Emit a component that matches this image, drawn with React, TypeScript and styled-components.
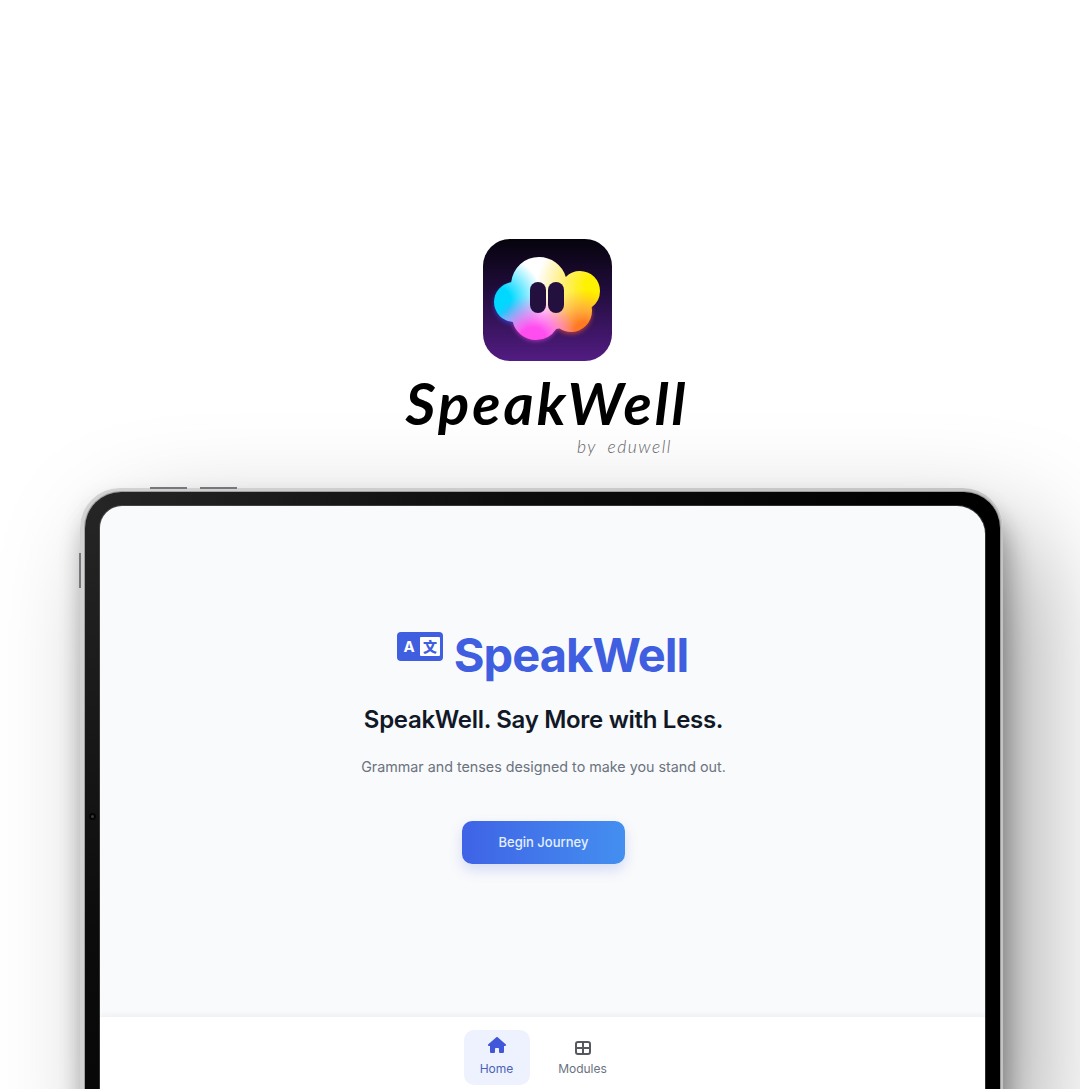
import React from 'react';
import styled, { createGlobalStyle } from 'styled-components';
import { FaHouse } from 'react-icons/fa6';

const GlobalStyle = createGlobalStyle`
  html, body {
    margin: 0;
    padding: 0;
    background: #ffffff;
  }
  body {
    font-family: Inter, "Liberation Sans", sans-serif;
  }
`;

const Page = styled.div`
  width: 1080px;
  height: 1089px;
  overflow: hidden;
  display: flex;
  flex-direction: column;
  padding-top: 239px;
  box-sizing: border-box;
`;

const Brand = styled.header`
  flex: none;
  display: flex;
  flex-direction: column;
  align-items: center;
  margin-left: 14px;
  height: 249px;
`;

const AppIcon = styled.svg`
  display: block;
  width: 129px;
  height: 122px;
`;

const Wordmark = styled.h1`
  margin: 12px 0 0;
  font-family: "Lato", sans-serif;
  font-style: italic;
  font-weight: 700;
  font-size: 58px;
  line-height: 60px;
  letter-spacing: 3px;
  color: #000000;
`;

const ByLine = styled.div`
  align-self: flex-end;
  margin: 3px 408px 0 0;
  font-family: "Lato", sans-serif;
  font-style: italic;
  font-weight: 300;
  font-size: 17.5px;
  line-height: 22px;
  letter-spacing: 1.5px;
  word-spacing: 5px;
  color: #67676b;
`;

const Tablet = styled.div`
  position: relative;
  flex: none;
  width: 923px;
  height: 640px;
  margin-left: 80px;
  box-sizing: border-box;
  padding: 4px 3px 0 5px;
  border-radius: 40px 40px 0 0;
  background: linear-gradient(90deg, #d2d2d2 0%, #c4c4c4 100%);
  box-shadow:
    6px 24px 26px rgba(0, 0, 0, 0.28),
    34px 46px 110px rgba(0, 0, 0, 0.34),
    -3px 6px 22px rgba(0, 0, 0, 0.07);
`;

const Bezel = styled.div`
  height: 100%;
  box-sizing: border-box;
  padding: 14px 15px 0;
  border-radius: 36px 36px 0 0;
  background: radial-gradient(circle at 0 0, #262626 0, #0c0c0c 440px, #000000 900px);
  box-shadow: 0 0 0 1px rgba(120, 120, 120, 0.55);
`;

const Screen = styled.main`
  height: 100%;
  display: flex;
  flex-direction: column;
  border-radius: 22px 28px 0 0;
  background: #f9fafb;
  overflow: hidden;
  box-shadow: 0 0 0 1px rgba(128, 128, 128, 0.35);
`;

const Hero = styled.section`
  flex: 0 0 511px;
  display: flex;
  flex-direction: column;
  align-items: center;
  padding: 117px 0 0 2px;
  box-sizing: border-box;
`;

const LogoRow = styled.div`
  display: flex;
  align-items: flex-start;
  gap: 11px;
  color: #3f5ee0;
  margin-left: -2px;
`;

const LogoGlyph = styled.svg`
  display: block;
  width: 46px;
  height: 29px;
  margin-top: 9px;
`;

const LogoText = styled.div`
  font-size: 47px;
  line-height: 64px;
  font-weight: 700;
  letter-spacing: -1px;
`;

const Title = styled.h2`
  margin: 17px 0 0;
  font-size: 24px;
  line-height: 32px;
  font-weight: 600;
  color: #111827;
  letter-spacing: -0.3px;
`;

const Subtitle = styled.p`
  margin: 19px 0 0;
  font-size: 14.3px;
  line-height: 24px;
  color: #6b7280;
`;

const CTA = styled.button`
  margin-top: 42px;
  width: 163px;
  height: 43px;
  padding: 0 0 2px;
  border: 0;
  border-radius: 10px;
  background: linear-gradient(90deg, #3f63e6 0%, #448ff0 100%);
  color: #e6effd;
  font-family: inherit;
  font-size: 13px;
  font-weight: 500;
  box-shadow: 0 6px 14px rgba(63, 99, 230, 0.2);
`;

const BottomNav = styled.nav`
  flex: 1;
  display: flex;
  justify-content: center;
  align-items: flex-start;
  gap: 20px;
  padding: 13px 6px 0 0;
  background: #ffffff;
  box-shadow: 0 -2px 6px rgba(0, 0, 0, 0.05);
`;

const NavItem = styled.div<{ $active?: boolean }>`
  width: 66px;
  height: 55px;
  box-sizing: border-box;
  padding-top: 6px;
  display: flex;
  flex-direction: column;
  align-items: center;
  border-radius: 10px;
  background: ${p => (p.$active ? '#eef2fe' : 'transparent')};
  color: ${p => (p.$active ? '#3f57d8' : '#55585f')};
`;

const NavIconBox = styled.div`
  height: 24px;
  display: flex;
  align-items: center;
  justify-content: center;
`;

const HomeGlyph = styled(FaHouse)`
  display: block;
  width: 18px;
  height: 16px;
  margin-bottom: 6px;
`;

const NavLabel = styled.span<{ $active?: boolean }>`
  font-size: 12px;
  line-height: 16px;
  margin-top: 1px;
  color: ${p => (p.$active ? '#4a62b8' : '#6b7280')};
`;

const VolumeKey = styled.span<{ $left: number }>`
  position: absolute;
  top: -1px;
  left: ${p => p.$left}px;
  width: 37px;
  height: 2px;
  background: #77777b;
`;

const PowerKey = styled.span`
  position: absolute;
  left: -1px;
  top: 65px;
  width: 2px;
  height: 35px;
  background: #77777b;
`;

const Camera = styled.span`
  position: absolute;
  left: 9px;
  top: 325px;
  width: 7px;
  height: 7px;
  border-radius: 50%;
  background: #3a3a3a;
  border: 2px solid #050505;
  box-sizing: border-box;
`;

const CloudLogo = () => (
  <AppIcon viewBox="0 0 129 122">
    <defs>
      <linearGradient id="tile" x1="0" y1="0" x2="0" y2="1">
        <stop offset="0" stopColor="#06030c" />
        <stop offset="0.4" stopColor="#1f0c3a" />
        <stop offset="1" stopColor="#521c82" />
      </linearGradient>
      <radialGradient id="cyan" gradientUnits="userSpaceOnUse" cx="14" cy="62" r="46">
        <stop offset="0.3" stopColor="#00d8ff" />
        <stop offset="1" stopColor="#00d8ff" stopOpacity="0" />
      </radialGradient>
      <radialGradient id="yellow" gradientUnits="userSpaceOnUse" cx="114" cy="48" r="60">
        <stop offset="0.2" stopColor="#fff200" />
        <stop offset="1" stopColor="#ffd400" stopOpacity="0" />
      </radialGradient>
      <radialGradient id="orange" gradientUnits="userSpaceOnUse" cx="100" cy="92" r="42">
        <stop offset="0.2" stopColor="#ff7a20" />
        <stop offset="1" stopColor="#ff9a2c" stopOpacity="0" />
      </radialGradient>
      <radialGradient id="pink" gradientUnits="userSpaceOnUse" cx="50" cy="102" r="46">
        <stop offset="0.3" stopColor="#ff4df0" />
        <stop offset="1" stopColor="#ff60e8" stopOpacity="0" />
      </radialGradient>
      <filter id="soft">
        <feGaussianBlur stdDeviation="0.5" />
      </filter>
      <filter id="glow" x="-20%" y="-20%" width="140%" height="140%">
        <feGaussianBlur stdDeviation="2" />
      </filter>
      <clipPath id="cloud">
        <circle cx="56" cy="46" r="28" />
        <circle cx="31" cy="63" r="20" />
        <circle cx="97" cy="52" r="20" />
        <circle cx="88" cy="72" r="21" />
        <circle cx="53" cy="77" r="24" />
        <circle cx="72" cy="66" r="24" />
        <rect x="30" y="45" width="66" height="35" />
      </clipPath>
    </defs>
    <rect width="129" height="122" rx="27" fill="url(#tile)" />
    <g filter="url(#glow)" opacity="0.55">
      <circle cx="53" cy="78" r="24" fill="#ff4df0" />
      <circle cx="88" cy="74" r="21" fill="#ff5a2c" />
      <circle cx="31" cy="65" r="20" fill="#2a5bff" />
    </g>
    <g clipPath="url(#cloud)" filter="url(#soft)">
      <rect width="129" height="122" fill="#ffffff" />
      <rect width="129" height="122" fill="url(#yellow)" />
      <rect width="129" height="122" fill="url(#cyan)" />
      <rect width="129" height="122" fill="url(#orange)" />
      <rect width="129" height="122" fill="url(#pink)" />
    </g>
    <rect x="47" y="43" width="16" height="31" rx="8" fill="#24103f" />
    <rect x="65" y="43" width="16" height="31" rx="8" fill="#24103f" />
  </AppIcon>
);

const TranslateGlyph = () => (
  <LogoGlyph viewBox="0 0 46 29">
    <rect width="46" height="29" rx="4" fill="currentColor" />
    <rect x="23" y="5" width="20" height="19" rx="1" fill="#ffffff" />
    <text x="12" y="20" textAnchor="middle" fontFamily="Inter, sans-serif" fontWeight="700" fontSize="15" fill="#ffffff">A</text>
    <text x="33" y="20" textAnchor="middle" fontFamily="'Noto Sans CJK SC', sans-serif" fontWeight="900" fontSize="14" fill="currentColor">文</text>
  </LogoGlyph>
);

const ModulesGlyph = () => (
  <svg width="16" height="14" viewBox="0 0 16 14" fill="none" stroke="currentColor" strokeWidth="2">
    <rect x="1" y="1" width="14" height="12" rx="2" />
    <path d="M8 1v12M1 7h14" />
  </svg>
);

const App = () => (
  <Page>
    <GlobalStyle />
    <Brand>
      <CloudLogo />
      <Wordmark>SpeakWell</Wordmark>
      <ByLine>by eduwell</ByLine>
    </Brand>
    <Tablet>
      <VolumeKey $left={70} />
      <VolumeKey $left={120} />
      <PowerKey />
      <Camera />
      <Bezel>
        <Screen>
          <Hero>
            <LogoRow>
              <TranslateGlyph />
              <LogoText>SpeakWell</LogoText>
            </LogoRow>
            <Title>SpeakWell. Say More with Less.</Title>
            <Subtitle>Grammar and tenses designed to make you stand out.</Subtitle>
            <CTA>Begin Journey</CTA>
          </Hero>
          <BottomNav>
            <NavItem $active>
              <NavIconBox>
                <HomeGlyph />
              </NavIconBox>
              <NavLabel $active>Home</NavLabel>
            </NavItem>
            <NavItem>
              <NavIconBox>
                <ModulesGlyph />
              </NavIconBox>
              <NavLabel>Modules</NavLabel>
            </NavItem>
          </BottomNav>
        </Screen>
      </Bezel>
    </Tablet>
  </Page>
);

export default App;
